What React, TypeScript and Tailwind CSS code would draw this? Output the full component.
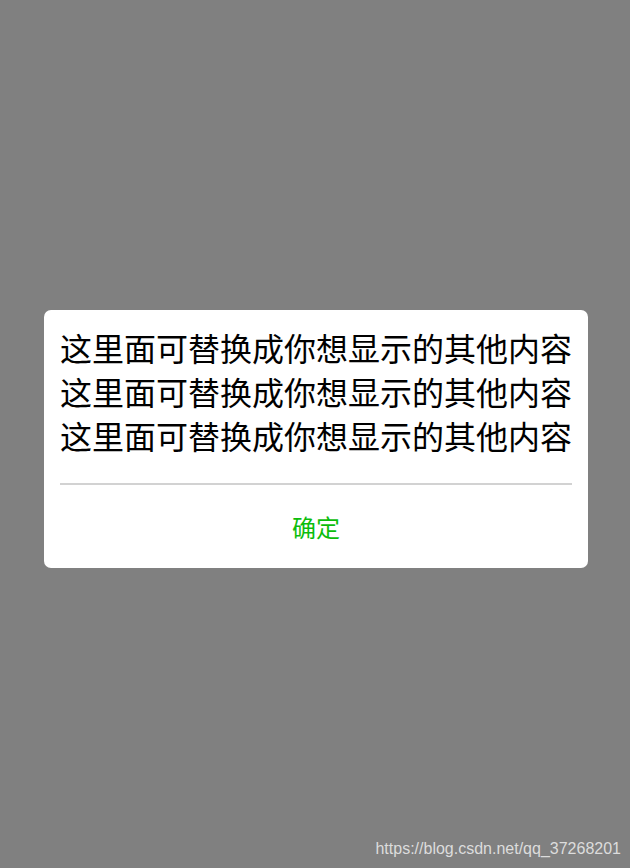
export default function App() {
  const line = '这里面可替换成你想显示的其他内容';
  return (
    <div
      className="relative h-[868px] w-full overflow-hidden bg-[#808080] pt-[310px]"
      style={{ fontFamily: '"Noto Sans CJK SC", "Noto Sans", sans-serif' }}
    >
      {/* Dialog */}
      <div className="mx-[44px] w-[544px] rounded-[7px] bg-white">
        <div className="px-[16px] pt-[15px] pb-[26px] text-[32px] leading-[44px] text-black whitespace-nowrap">
          <div>{line}</div>
          <div>{line}</div>
          <div>{line}</div>
        </div>
        <div className="mx-[16px] h-[2px] bg-[#d2d2d2]" />
        <div className="flex h-[83px] items-center justify-center text-[24px] text-[#0bbd0b]">
          确定
        </div>
      </div>

      {/* Watermark */}
      <div
        className="absolute right-[9px] bottom-[10px] text-[16px] leading-[18px] text-[#dcdcdc]"
        style={{ fontFamily: '"Liberation Sans", Arial, sans-serif' }}
      >
        https://blog.csdn.net/qq_37268201
      </div>
    </div>
  );
}
